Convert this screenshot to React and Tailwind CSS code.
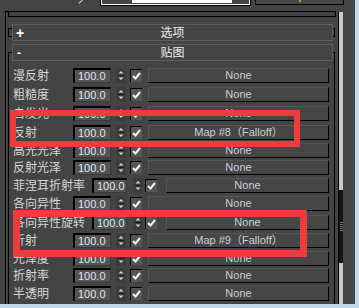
import React from 'react';

const ROWS = [
  { label: '漫反射', h: 'h-[19px]' },
  { label: '粗糙度', h: 'h-[19px]' },
  { label: '自发光', h: 'h-[19px]' },
  { label: '反射', h: 'h-[18px]', map: 'Map #8（Falloff）' },
  { label: '高光光泽', h: 'h-[17px]' },
  { label: '反射光泽', h: 'h-[18px]' },
  { label: '菲涅耳折射率', h: 'h-[18px]', wide: true },
  { label: '各向异性', h: 'h-[19px]' },
  { label: '各向异性旋转', h: 'h-[18px]', wide: true },
  { label: '折射', h: 'h-[18px]', map: 'Map #9（Falloff）' },
  { label: '光泽度', h: 'h-[17px]' },
  { label: '折射率', h: 'h-[18px]' },
  { label: '半透明', h: 'h-[18px]' },
];

function Spinner() {
  return (
    <svg width="10" height="15" viewBox="0 0 10 15" className="shrink-0">
      <rect x="0" y="0" width="10" height="15" fill="#3c3c3c" />
      <path d="M2.5 5.5 L5 3 L7.5 5.5 Z" fill="#d6d6d6" />
      <rect x="2" y="7" width="6" height="1" fill="#1a1a1a" />
      <path d="M2.5 9.5 L5 12 L7.5 9.5 Z" fill="#d6d6d6" />
    </svg>
  );
}

function Check() {
  return (
    <div className="w-[12px] h-[13px] shrink-0 bg-[#555] border-t border-l border-black flex items-center justify-center">
      <svg width="9" height="8" viewBox="0 0 9 8">
        <path d="M1 4 L3.5 6.5 L8 1" stroke="#f2f2f2" strokeWidth="2" fill="none" />
      </svg>
    </div>
  );
}

function Row({ row }) {
  const wide = row.wide;
  return (
    <div className={row.h}>
      <div className="flex items-center h-[15px] pl-[4px]">
        <span className={(wide ? 'w-[79px]' : 'w-[60px]') + ' shrink-0 text-[12px] leading-none text-[#d6d6d6] whitespace-nowrap'}>
          {row.label}
        </span>
        <div className={(wide ? 'w-[35px]' : 'w-[38px]') + ' h-[15px] shrink-0 bg-[#545454] border-t-2 border-l-2 border-black border-b border-r border-b-[#3a3a3a] border-r-[#3a3a3a] pl-[3px] flex items-center text-[11px] leading-none text-[#dfe6f2] font-["Liberation_Sans",sans-serif]'}>
          100.0
        </div>
        <div className={wide ? 'ml-[6px]' : 'ml-[5px]'}>
          <Spinner />
        </div>
        <div className={wide ? 'ml-[2px]' : 'ml-[4px]'}>
          <Check />
        </div>
        <div className={(wide ? 'ml-[9px] w-[163px]' : 'ml-[6px] w-[181px]') + ' h-[15px] shrink-0 bg-[#464646] border-t border-l border-[#555] border-b border-r border-b-black border-r-black flex items-center justify-center text-[11px] leading-none text-[#c6cfda] whitespace-nowrap'}>
          {row.map || 'None'}
        </div>
      </div>
    </div>
  );
}

export default function App() {
  return (
    <div className="w-[359px] h-[308px] bg-[#c2d6ec] font-['Liberation_Sans','Noto_Sans_CJK_SC',sans-serif]">
      <div className="relative w-[355px] h-[304px] bg-[#444] flex flex-col overflow-hidden">
        {/* top strip */}
        <div className="h-[11px] flex items-start shrink-0">
          <div className="w-[78px]" />
          <svg width="6" height="4" viewBox="0 0 6 4" className="shrink-0">
            <path d="M0.5 3.5 L4.5 0" stroke="#bdbdbd" strokeWidth="1.2" />
          </svg>
          <div className="w-[16px]" />
          <div className="w-[151px] h-[6px] shrink-0 border-l border-r border-b border-black">
            <div className="h-full border-l border-r border-b border-white flex">
              <div className="flex-1" />
              <div className="w-[100px] h-[3px] bg-white" />
              <div className="w-[17px]" />
            </div>
          </div>
          <div className="w-[4px]" />
          <div className="relative w-[89px] h-[5px] shrink-0 bg-[#484848] border-l border-r border-b border-black">
            <div className="absolute left-[43px] top-0 w-[2px] h-[2px] bg-[#d08a3a]" />
          </div>
        </div>

        {/* panel body */}
        <div className="flex flex-1 min-h-0">
          <div className="w-[5px] shrink-0" />
          <div className="w-[331px] shrink-0 border-l border-t border-black flex flex-col">
            {/* collapsed rollout bottom */}
            <div className="ml-[2px] w-[328px] h-[6px] border-l border-r border-b border-black" />

            {/* 选项 rollout (closed) */}
            <div className="relative ml-[2px] w-[327px] h-[17px] mt-[7px] shrink-0">
              <div className="absolute left-0 right-0 top-[4px] h-[9px] border border-black" />
              <div className="absolute left-[4px] top-0 w-[321px] h-[17px] bg-[#444] border border-[#5e5e5e] flex items-center">
                <span className="pl-[3px] text-[14px] font-bold leading-none text-white">+</span>
                <span className="absolute left-0 right-0 text-center text-[12px] leading-none text-[#ececec]">选项</span>
              </div>
            </div>

            {/* 贴图 rollout (open) */}
            <div className="relative ml-[2px] w-[327px] mt-[3px] pt-[8px] flex-1">
              <div className="h-full border-l border-r border-t border-black pt-[15px] flex flex-col">
                {ROWS.map((r) => (
                  <Row key={r.label} row={r} />
                ))}
              </div>
              <div className="absolute left-[4px] top-0 w-[321px] h-[17px] bg-[#444] border border-[#5e5e5e] flex items-center">
                <span className="pl-[4px] text-[12px] font-bold leading-none text-white">-</span>
                <span className="absolute left-0 right-0 text-center text-[12px] leading-none text-[#ececec]">贴图</span>
              </div>
            </div>
          </div>
          <div className="w-[2px] shrink-0" />
          {/* scrollbar */}
          <div className="mt-[1px] w-[5px] shrink-0 border-l border-black flex flex-col">
            <div className="h-[178px] bg-[#c9c9c9]" />
            <div className="h-[73px] bg-[#151515] flex flex-col items-center justify-center gap-[1px]">
              <div className="w-[3px] h-[1px] bg-[#777]" />
              <div className="w-[3px] h-[1px] bg-[#777]" />
              <div className="w-[3px] h-[1px] bg-[#777]" />
              <div className="w-[3px] h-[1px] bg-[#777]" />
              <div className="w-[3px] h-[1px] bg-[#777]" />
            </div>
            <div className="flex-1 bg-[#c9c9c9]" />
          </div>
          <div className="flex-1" />
        </div>

        {/* annotation boxes */}
        <div className="absolute left-[10px] top-[110px] w-[290px] h-[37px] border-[6px] border-[#ef3b3b]" />
        <div className="absolute left-[13px] top-[210px] w-[294px] h-[47px] border-[7px] border-[#ef3b3b]" />
      </div>
    </div>
  );
}
